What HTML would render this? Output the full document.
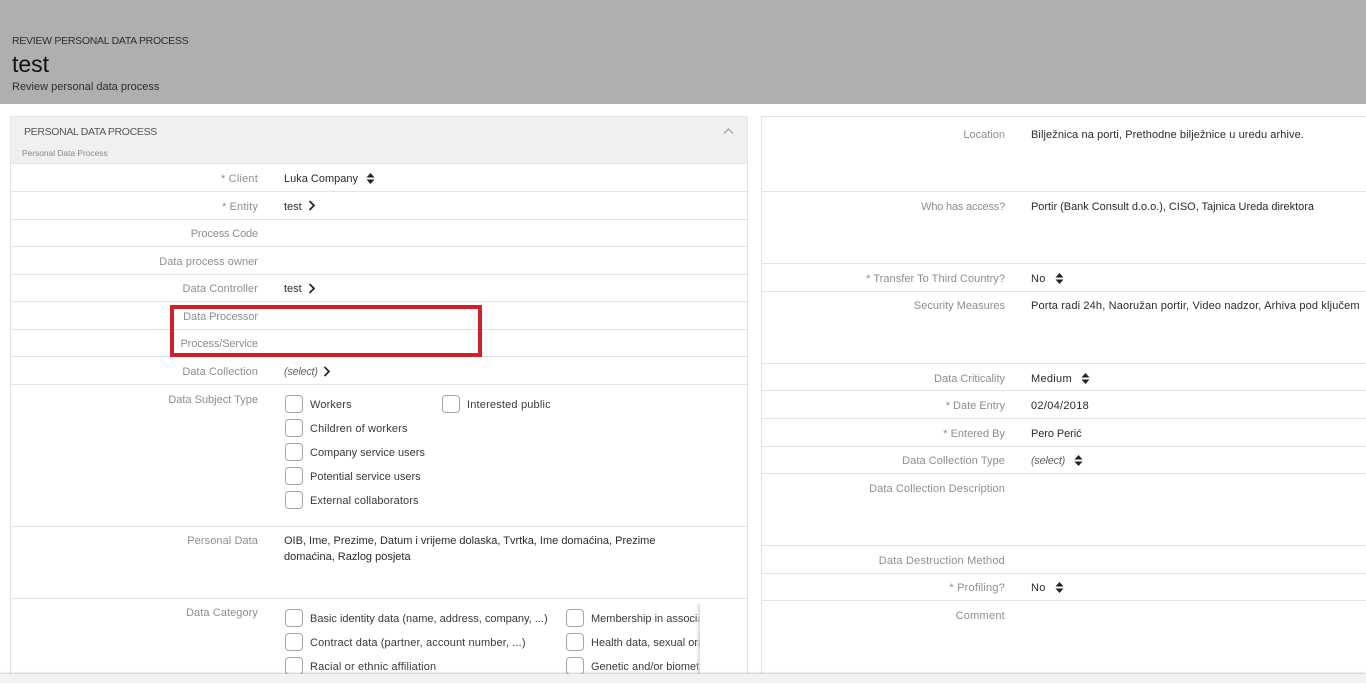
<!DOCTYPE html>
<html><head><meta charset="utf-8"><style>
html,body{margin:0;padding:0;width:1366px;height:683px;overflow:hidden;background:#fff}
body{position:relative;font-family:"Liberation Sans",sans-serif;font-size:11px;color:#333}
div{position:absolute;white-space:nowrap}
.l{right:0;color:#8e8e8e;text-align:right;line-height:14px}
.a{left:0;width:258px}.b{left:0;width:1005px}
.v{color:#2b2b2b;line-height:14px}
.h{height:1px;background:#e3e3e3}
.c{width:16px;height:16px;border:1.5px solid #a6a6a6;border-radius:4px;background:#fff}
.t{color:#3a3a3a;line-height:14px}
svg{position:absolute;overflow:visible}
</style></head><body>
<div style="left:0;top:0;width:1366px;height:104px;background:#aeb0af"></div>
<div style="left:12px;top:34px;color:#2c2e2e;line-height:14px;font-size:10.5px;letter-spacing:-.28px">REVIEW PERSONAL DATA PROCESS</div>
<div style="left:12px;top:51px;color:#111;font-size:23px;line-height:27px">test</div>
<div style="left:12px;top:80px;color:#2c2e2e;line-height:14px">Review personal data process</div>

<div style="left:10px;top:116px;width:738px;height:570px;border:1px solid #e3e3e3;box-sizing:border-box"></div>
<div style="left:10px;top:116px;width:738px;height:48px;background:#f0f0f0;border:1px solid #e6e6e6;box-sizing:border-box"></div>
<div style="left:24px;top:125px;color:#555;line-height:14px;font-size:10.5px;letter-spacing:-.33px">PERSONAL DATA PROCESS</div>
<div style="left:22px;top:147px;color:#8a8a8a;font-size:8.4px;line-height:12px">Personal Data Process</div>
<svg style="left:723px;top:127px" width="11" height="8"><path d="M1 6.500L5.500 2L10 6.500" fill="none" stroke="#a8a8a8" stroke-width="1.400"/></svg>

<div class="h" style="left:11px;width:737px;top:191px"></div>
<div class="h" style="left:11px;width:737px;top:219px"></div>
<div class="h" style="left:11px;width:737px;top:246px"></div>
<div class="h" style="left:11px;width:737px;top:274px"></div>
<div class="h" style="left:11px;width:737px;top:301px"></div>
<div class="h" style="left:11px;width:737px;top:329px"></div>
<div class="h" style="left:11px;width:737px;top:356px"></div>
<div class="h" style="left:11px;width:737px;top:384px"></div>
<div class="h" style="left:11px;width:737px;top:526px"></div>
<div class="h" style="left:11px;width:737px;top:598px"></div>

<div class="l a" style="top:172px;letter-spacing:.2px">* Client</div>
<div class="l a" style="top:200px;letter-spacing:.15px">* Entity</div>
<div class="l a" style="top:227px;letter-spacing:-.15px">Process Code</div>
<div class="l a" style="top:255px;letter-spacing:.05px">Data process owner</div>
<div class="l a" style="top:282px;letter-spacing:.1px">Data Controller</div>
<div class="l a" style="top:310px;letter-spacing:-.07px">Data Processor</div>
<div class="l a" style="top:337px;letter-spacing:-.13px">Process/Service</div>
<div class="l a" style="top:365px;letter-spacing:.07px">Data Collection</div>
<div class="l a" style="top:393px">Data Subject Type</div>
<div class="l a" style="top:534px;letter-spacing:.08px">Personal Data</div>
<div class="l a" style="top:606px;letter-spacing:.08px">Data Category</div>

<div class="v" style="left:284px;top:172px">Luka Company</div>
<svg style="left:366px;top:172.500px" width="9" height="11"><path d="M4.500 0L8.500 4.500H.5zM4.500 11L.5 6.500H8.500z" fill="#222"/></svg>
<div class="v" style="left:284px;top:200px">test</div>
<svg style="left:308px;top:200px" width="8" height="11"><path d="M1.500 1L6 5.500L1.500 10" fill="none" stroke="#222" stroke-width="1.700"/></svg>
<div class="v" style="left:284px;top:282px">test</div>
<svg style="left:308px;top:283px" width="8" height="11"><path d="M1.500 1L6 5.500L1.500 10" fill="none" stroke="#222" stroke-width="1.700"/></svg>
<div class="v" style="left:284px;top:365px;font-style:italic;color:#666;letter-spacing:-.3px">(select)</div>
<svg style="left:323px;top:366px" width="8" height="11"><path d="M1.500 1L6 5.500L1.500 10" fill="none" stroke="#222" stroke-width="1.700"/></svg>

<div style="left:170px;top:304.500px;width:311.500px;height:52px;border:4px solid #d21f2e;box-sizing:border-box"></div>

<div class="c" style="left:285px;top:395px"></div><div class="t" style="left:310px;top:398px;letter-spacing:.14px">Workers</div>
<div class="c" style="left:442px;top:395px"></div><div class="t" style="left:467px;top:398px;letter-spacing:.18px">Interested public</div>
<div class="c" style="left:285px;top:419px"></div><div class="t" style="left:310px;top:422px;letter-spacing:.15px">Children of workers</div>
<div class="c" style="left:285px;top:443px"></div><div class="t" style="left:310px;top:446px">Company service users</div>
<div class="c" style="left:285px;top:467px"></div><div class="t" style="left:310px;top:470px">Potential service users</div>
<div class="c" style="left:285px;top:491px"></div><div class="t" style="left:310px;top:494px;letter-spacing:.1px">External collaborators</div>

<div class="v" style="left:284px;top:534px">OIB, Ime, Prezime, Datum i vrijeme dolaska, Tvrtka, Ime domaćina, Prezime</div>
<div class="v" style="left:284px;top:550px">domaćina, Razlog posjeta</div>

<div style="left:285px;top:604px;width:415px;height:70px;overflow:hidden">
<div class="c" style="left:0;top:5px"></div><div class="t" style="left:25px;top:8px">Basic identity data (name, address, company, ...)</div>
<div class="c" style="left:281px;top:5px"></div><div class="t" style="left:306px;top:8px">Membership in associations</div>
<div class="c" style="left:0;top:29px"></div><div class="t" style="left:25px;top:32px;letter-spacing:.12px">Contract data (partner, account number, ...)</div>
<div class="c" style="left:281px;top:29px"></div><div class="t" style="left:306px;top:32px">Health data, sexual orientation</div>
<div class="c" style="left:0;top:53px"></div><div class="t" style="left:25px;top:56px;letter-spacing:.15px">Racial or ethnic affiliation</div>
<div class="c" style="left:281px;top:53px"></div><div class="t" style="left:306px;top:56px">Genetic and/or biometric data</div>
</div>
<div style="left:696px;top:604px;width:4px;height:70px;background:linear-gradient(90deg,rgba(225,225,225,0),#d8d8d8)"></div>

<div style="left:761px;top:116px;width:610px;height:570px;border:1px solid #e3e3e3;box-sizing:border-box"></div>
<div class="h" style="left:762px;width:604px;top:191px"></div>
<div class="h" style="left:762px;width:604px;top:263px"></div>
<div class="h" style="left:762px;width:604px;top:291px"></div>
<div class="h" style="left:762px;width:604px;top:363px"></div>
<div class="h" style="left:762px;width:604px;top:390px"></div>
<div class="h" style="left:762px;width:604px;top:418px"></div>
<div class="h" style="left:762px;width:604px;top:446px"></div>
<div class="h" style="left:762px;width:604px;top:473px"></div>
<div class="h" style="left:762px;width:604px;top:545px"></div>
<div class="h" style="left:762px;width:604px;top:573px"></div>
<div class="h" style="left:762px;width:604px;top:600px"></div>

<div class="l b" style="top:128px">Location</div>
<div class="l b" style="top:200px;letter-spacing:-.2px">Who has access?</div>
<div class="l b" style="top:272px;letter-spacing:.04px">* Transfer To Third Country?</div>
<div class="l b" style="top:299px">Security Measures</div>
<div class="l b" style="top:372px">Data Criticality</div>
<div class="l b" style="top:399px">* Date Entry</div>
<div class="l b" style="top:427px">* Entered By</div>
<div class="l b" style="top:454px;letter-spacing:.08px">Data Collection Type</div>
<div class="l b" style="top:482px;letter-spacing:.12px">Data Collection Description</div>
<div class="l b" style="top:554px;letter-spacing:.2px">Data Destruction Method</div>
<div class="l b" style="top:581px;letter-spacing:.2px">* Profiling?</div>
<div class="l b" style="top:609px;letter-spacing:.25px">Comment</div>

<div class="v" style="left:1031px;top:128px;letter-spacing:.09px">Bilježnica na porti, Prethodne bilježnice u uredu arhive.</div>
<div class="v" style="left:1031px;top:200px;letter-spacing:-.03px">Portir (Bank Consult d.o.o.), CISO, Tajnica Ureda direktora</div>
<div class="v" style="left:1031px;top:272px;letter-spacing:.3px">No</div>
<svg style="left:1055px;top:272.500px" width="9" height="11"><path d="M4.500 0L8.500 4.500H.5zM4.500 11L.5 6.500H8.500z" fill="#222"/></svg>
<div class="v" style="left:1031px;top:299px;letter-spacing:.15px">Porta radi 24h, Naoružan portir, Video nadzor, Arhiva pod ključem</div>
<div class="v" style="left:1031px;top:372px;letter-spacing:.3px">Medium</div>
<svg style="left:1081px;top:372.500px" width="9" height="11"><path d="M4.500 0L8.500 4.500H.5zM4.500 11L.5 6.500H8.500z" fill="#222"/></svg>
<div class="v" style="left:1031px;top:399px;letter-spacing:.3px">02/04/2018</div>
<div class="v" style="left:1031px;top:427px;letter-spacing:-.08px">Pero Perić</div>
<div class="v" style="left:1031px;top:454px;font-style:italic;color:#666;letter-spacing:-.25px">(select)</div>
<svg style="left:1074px;top:455px" width="9" height="11"><path d="M4.500 0L8.500 4.500H.5zM4.500 11L.5 6.500H8.500z" fill="#222"/></svg>
<div class="v" style="left:1031px;top:581px;letter-spacing:.3px">No</div>
<svg style="left:1055px;top:582px" width="9" height="11"><path d="M4.500 0L8.500 4.500H.5zM4.500 11L.5 6.500H8.500z" fill="#222"/></svg>

<div style="left:0;top:674px;width:1366px;height:9px;background:#f2f2f2;box-shadow:0 -1px 2px rgba(0,0,0,.2)"></div>
</body></html>
